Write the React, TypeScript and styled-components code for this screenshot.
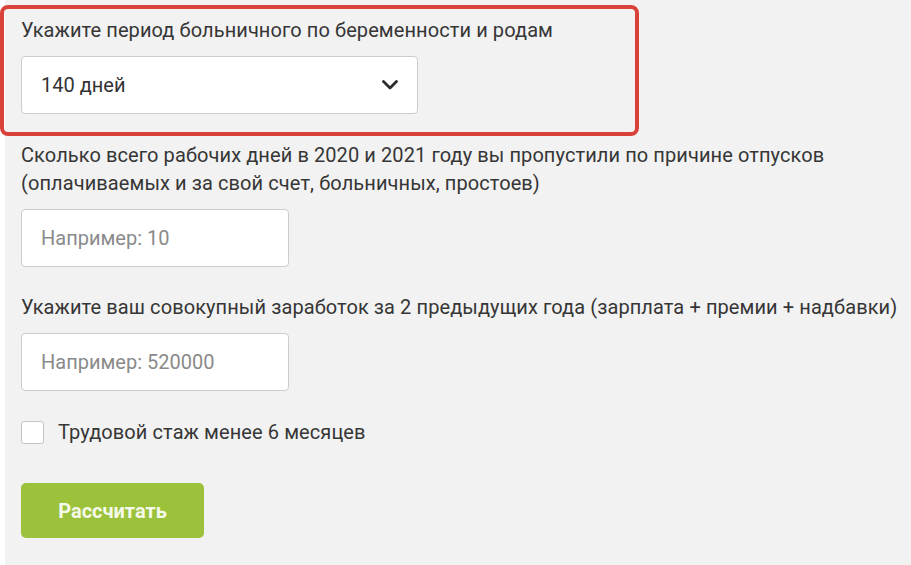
import React from "react";
import styled, { createGlobalStyle } from "styled-components";

const GlobalStyle = createGlobalStyle`
  html, body {
    margin: 0;
    padding: 0;
    background: #ffffff;
  }
  body {
    font-family: Roboto, "Noto Sans", "Liberation Sans", sans-serif;
    color: #333333;
  }
`;

const Page = styled.div`
  padding-left: 5px;
  background: #ffffff;
`;

const Panel = styled.div`
  background: #f2f2f2;
  min-height: 565px;
  padding: 0 12px 0 16px;
  box-sizing: border-box;
  display: flex;
  flex-direction: column;
  align-items: flex-start;
`;

const Highlight = styled.div`
  margin: 5px 0 0 -21px;
  width: 639px;
  box-sizing: border-box;
  border: 4px solid #d8423b;
  border-radius: 8px;
  padding: 7px 0 18px 17px;
  display: flex;
  flex-direction: column;
  gap: 12px;
`;

const Field = styled.div<{ $top: number }>`
  margin-top: ${(p) => p.$top}px;
  display: flex;
  flex-direction: column;
  gap: 12px;
`;

const Label = styled.div`
  font-size: 20px;
  line-height: 28px;
  letter-spacing: 0.09px;
  color: #363636;
  white-space: nowrap;
`;

const SelectBox = styled.div`
  width: 397px;
  height: 58px;
  box-sizing: border-box;
  background: #ffffff;
  border: 1px solid #cccccc;
  border-radius: 4px;
  display: flex;
  align-items: center;
  justify-content: space-between;
  padding: 0 19px;
  font-size: 20px;
  color: #333333;
`;

const TextInput = styled.input`
  width: 268px;
  height: 58px;
  box-sizing: border-box;
  background: #ffffff;
  border: 1px solid #cccccc;
  border-radius: 4px;
  padding: 0 19px;
  font-family: inherit;
  font-size: 20px;
  color: #333333;
  outline: none;

  &::placeholder {
    color: #8a8a8a;
  }
`;

const CheckRow = styled.label`
  margin-top: 27px;
  height: 28px;
  display: flex;
  align-items: center;
  gap: 14px;
  font-size: 20px;
  letter-spacing: 0.09px;
  color: #363636;
`;

const CheckBox = styled.span`
  width: 23px;
  height: 23px;
  box-sizing: border-box;
  background: #ffffff;
  border: 1px solid #c4c4c4;
  border-radius: 3px;
`;

const Button = styled.button`
  margin-top: 37px;
  width: 183px;
  height: 55px;
  border: none;
  border-radius: 5px;
  background: #9cc23b;
  color: #f5f9ea;
  font-family: inherit;
  font-size: 20px;
  font-weight: 700;
  cursor: pointer;
`;

const Chevron = () => (
  <svg width="16" height="10" viewBox="0 0 16 10">
    <polyline
      points="1.5,1.5 8,8 14.5,1.5"
      fill="none"
      stroke="#2b2b2b"
      strokeWidth="2.8"
      strokeLinecap="round"
      strokeLinejoin="round"
    />
  </svg>
);

export default function App() {
  return (
    <>
      <GlobalStyle />
      <Page>
        <Panel>
          <Highlight>
            <Label>Укажите период больничного по беременности и родам</Label>
            <SelectBox>
              <span>140 дней</span>
              <Chevron />
            </SelectBox>
          </Highlight>

          <Field $top={5}>
            <Label>
              Сколько всего рабочих дней в 2020 и 2021 году вы пропустили по причине отпусков
              <br />
              (оплачиваемых и за свой счет, больничных, простоев)
            </Label>
            <TextInput placeholder="Например: 10" />
          </Field>

          <Field $top={26}>
            <Label>
              Укажите ваш совокупный заработок за 2 предыдущих года (зарплата + премии + надбавки)
            </Label>
            <TextInput placeholder="Например: 520000" />
          </Field>

          <CheckRow>
            <CheckBox />
            Трудовой стаж менее 6 месяцев
          </CheckRow>

          <Button>Рассчитать</Button>
        </Panel>
      </Page>
    </>
  );
}
